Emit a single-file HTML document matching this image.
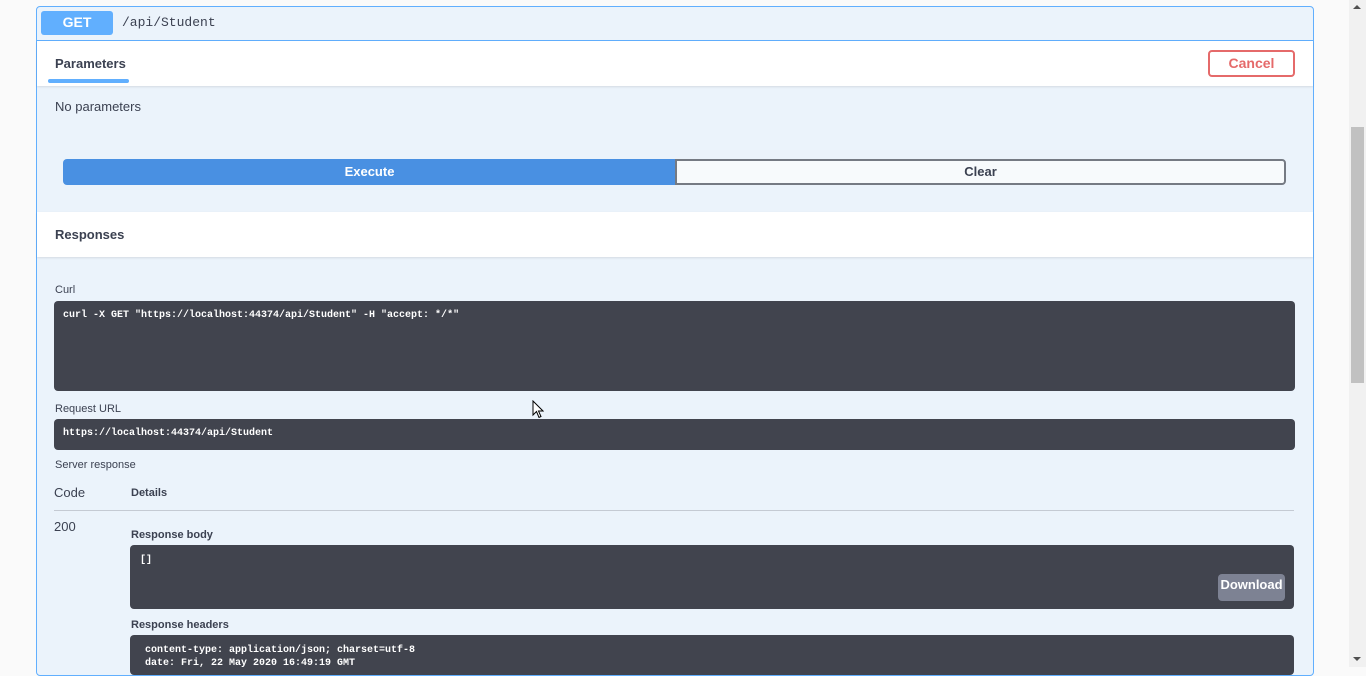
<!DOCTYPE html>
<html><head><meta charset="utf-8"><style>
*{margin:0;padding:0;box-sizing:border-box}
body{width:1366px;height:667px;overflow:hidden;background:#fafafa;font-family:"Liberation Sans",sans-serif;color:#3b4151;position:relative}
.a{position:absolute}
.box{left:36px;top:6px;width:1278px;height:670px;border:1px solid #61affe;border-radius:4px;background:#ebf3fb}
.dark{background:#41444e;border-radius:4px;color:#fff;font-family:"Liberation Mono",monospace;font-weight:bold;font-size:10px}
.lbl{font-size:12px;color:#3b4151}
</style></head><body>
<div class="a box"></div>
<div class="a" style="left:37px;top:40px;width:1276px;height:1px;background:#61affe"></div>
<div class="a" style="left:41px;top:11px;width:72px;height:24px;background:#61affe;border-radius:3px;color:#fff;font-weight:bold;font-size:14px;text-align:center;line-height:22px">GET</div>
<div class="a" style="left:122px;top:15px;font-family:'Liberation Mono',monospace;font-size:13px;color:#3b4151">/api/Student</div>
<div class="a" style="left:37px;top:41px;width:1276px;height:45px;background:#fff;box-shadow:0 1px 2px rgba(0,0,0,.1)"></div>
<div class="a" style="left:55px;top:56px;font-size:13px;font-weight:bold;color:#3b4151">Parameters</div>
<div class="a" style="left:48px;top:79px;width:81px;height:4px;background:#61affe;border-radius:2px"></div>
<div class="a" style="left:1208px;top:50px;width:87px;height:27px;border:2px solid #e56a6a;border-radius:4px;color:#e56a6a;font-size:14px;font-weight:bold;text-align:center;line-height:23px;background:#fff">Cancel</div>
<div class="a" style="left:55px;top:99px;font-size:13px">No parameters</div>
<div class="a" style="left:63px;top:159px;width:613px;height:26px;background:#4990e2;border-radius:4px 0 0 4px;color:#fff;font-weight:bold;font-size:13px;text-align:center;line-height:26px">Execute</div>
<div class="a" style="left:675px;top:159px;width:611px;height:26px;border:2px solid #757a83;border-radius:0 4px 4px 0;font-weight:bold;font-size:13px;text-align:center;line-height:22px;background:#f7fafc">Clear</div>
<div class="a" style="left:37px;top:212px;width:1276px;height:45px;background:#fff;box-shadow:0 1px 2px rgba(0,0,0,.1)"></div>
<div class="a" style="left:55px;top:227px;font-size:13px;font-weight:bold">Responses</div>
<div class="a lbl" style="left:55px;top:284px;font-size:11px">Curl</div>
<div class="a dark" style="left:54px;top:301px;width:1241px;height:90px;padding:9px 9px">curl -X GET "https://localhost:44374/api/Student" -H "accept: */*"</div>
<div class="a lbl" style="left:55px;top:403px;font-size:11px">Request URL</div>
<div class="a dark" style="left:54px;top:419px;width:1241px;height:31px;padding:9px 9px">https://localhost:44374/api/Student</div>
<div class="a lbl" style="left:55px;top:459px;font-size:11px">Server response</div>
<div class="a" style="left:54px;top:485px;font-size:13px">Code</div>
<div class="a" style="left:131px;top:487px;font-size:11px;font-weight:bold">Details</div>
<div class="a" style="left:54px;top:510px;width:1240px;height:1px;background:#c4cad3"></div>
<div class="a" style="left:54px;top:519px;font-size:13px">200</div>
<div class="a" style="left:131px;top:529px;font-size:11px;font-weight:bold">Response body</div>
<div class="a dark" style="left:130px;top:545px;width:1164px;height:64px;padding:10px 10px">[]</div>
<div class="a" style="left:1218px;top:574px;width:67px;height:27px;background:#7d8293;border-radius:4px;color:#fff;font-weight:bold;font-size:13px;text-align:center;line-height:22px">Download</div>
<div class="a" style="left:131px;top:619px;font-size:11px;font-weight:bold">Response headers</div>
<div class="a dark" style="left:130px;top:635px;width:1164px;height:40px;padding:9px 15px;line-height:13px">content-type: application/json; charset=utf-8<br>date: Fri, 22 May 2020 16:49:19 GMT</div>
<div class="a" style="left:1349px;top:0;width:17px;height:667px;background:#f1f1f1"></div>
<div class="a" style="left:1351px;top:127px;width:13px;height:256px;background:#c1c1c1"></div>
<div class="a" style="left:1353px;top:5px;width:0;height:0;border-left:4px solid transparent;border-right:4px solid transparent;border-bottom:4px solid #505050"></div>
<div class="a" style="left:1353px;top:657px;width:0;height:0;border-left:4px solid transparent;border-right:4px solid transparent;border-top:4px solid #505050"></div>
<svg class="a" style="left:532px;top:400px" width="12" height="19" viewBox="0 0 12 19"><path d="M1 1 L1 15 L4.5 11.5 L7 17.5 L9 16.5 L6.5 11 L11 11 Z" fill="#fff" stroke="#000" stroke-width="1"/></svg>
</body></html>
